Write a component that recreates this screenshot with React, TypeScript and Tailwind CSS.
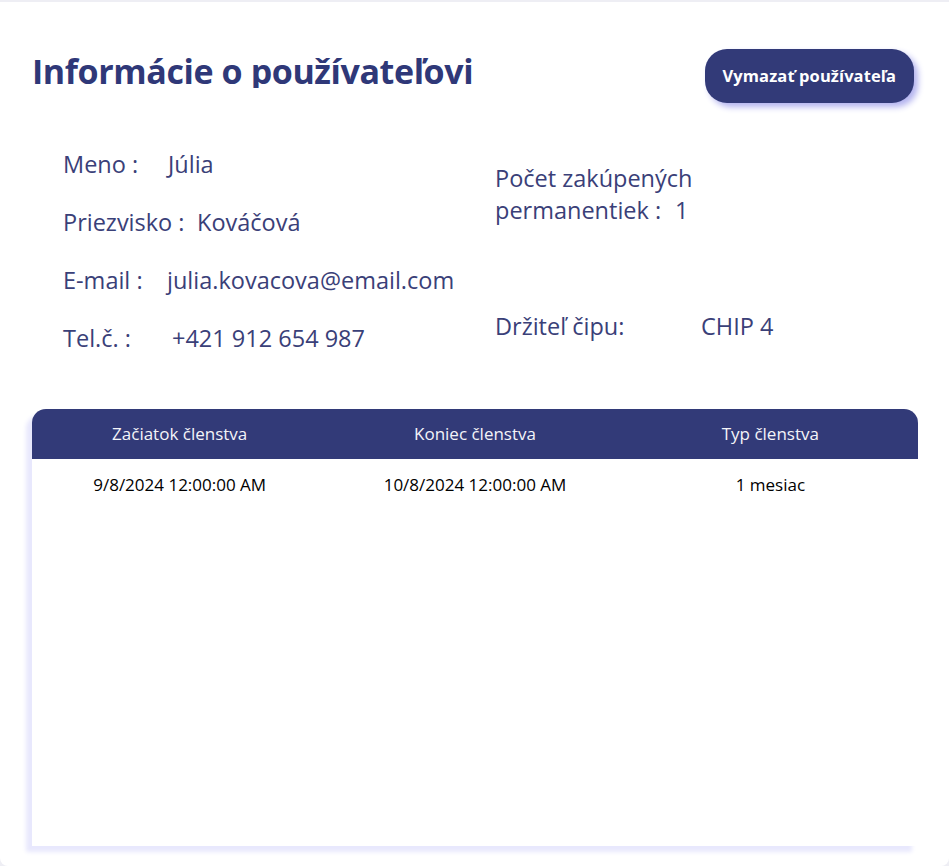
import React from 'react';

const rows = [
  { start: '9/8/2024 12:00:00 AM', end: '10/8/2024 12:00:00 AM', type: '1 mesiac' },
];

export default function App() {
  return (
    <div className="min-h-[866px] bg-[#eeeef4] pt-[2px] font-['Open_Sans',sans-serif]">
      <div className="bg-white rounded-b-lg min-h-[864px] px-8 pt-[47px] pb-5">
        {/* Header */}
        <div className="flex items-start justify-between">
          <h1 className="mt-[3px] h-[36px] overflow-hidden text-[34px] leading-[38px] font-bold text-[#2f3878] tracking-[-0.4px]">
            Informácie o používateľovi
          </h1>
          <button className="mr-[3px] h-[54px] px-[18px] rounded-[22px] bg-[#323a78] text-white text-[16.5px] font-bold tracking-[0.1px] shadow-[4px_4px_6px_#b3b3ef]">
            Vymazať používateľa
          </button>
        </div>

        {/* User info */}
        <div className="flex mt-[45px] text-[23.5px] text-[#3a4078]">
          <div className="w-[463px] pl-[31px] flex flex-col gap-[26px] leading-[32px]">
            <div><span className="inline-block w-[105px]">Meno :</span>Júlia</div>
            <div><span className="inline-block w-[134px]">Priezvisko :</span>Kováčová</div>
            <div><span className="inline-block w-[104px]">E-mail :</span>julia.kovacova@email.com</div>
            <div><span className="inline-block w-[109px]">Tel.č. :</span>+421 912 654 987</div>
          </div>
          <div className="flex flex-col leading-[32px] pt-[14px]">
            <div>Počet zakúpených</div>
            <div><span className="inline-block w-[180px]">permanentiek :</span>1</div>
            <div className="mt-[84px]"><span className="inline-block w-[206px]">Držiteľ čipu:</span>CHIP 4</div>
          </div>
        </div>

        {/* Membership table */}
        <div className="mt-[55px] h-[437px] mr-[-1px] rounded-t-[14px] bg-white shadow-[-6px_6px_4px_#e8e8fd]">
          <div className="grid grid-cols-3 h-[50px] items-center rounded-t-[14px] bg-[#323a78] text-[#f4f4f8] text-[17px]">
            <div className="text-center">Začiatok členstva</div>
            <div className="text-center">Koniec členstva</div>
            <div className="text-center">Typ členstva</div>
          </div>
          {rows.map((r, i) => (
            <div key={i} className="grid grid-cols-3 h-[52px] items-center text-[17px] text-black">
              <div className="text-center">{r.start}</div>
              <div className="text-center">{r.end}</div>
              <div className="text-center">{r.type}</div>
            </div>
          ))}
        </div>
      </div>
    </div>
  );
}
